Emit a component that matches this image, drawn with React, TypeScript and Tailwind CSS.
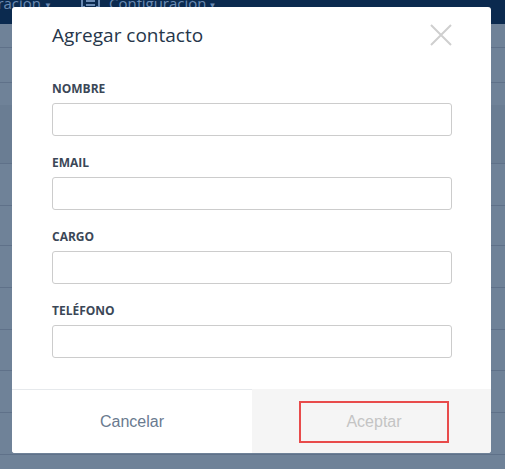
import { Fragment } from "react";

const rowLines = [47, 82, 163, 205, 245, 287, 329, 370, 412, 454];

const fields = ["NOMBRE", "EMAIL", "CARGO", "TELÉFONO"];

export default function App() {
  return (
    <div className="relative h-[469px] w-[505px] overflow-hidden bg-[#6f8298] font-['Open_Sans',sans-serif]">
      {/* page behind the overlay */}
      <div className="flex h-[24px] items-start overflow-hidden bg-[#0b2a4f] text-[15px] leading-none text-[#6a8ab3]">
        <span className="-ml-[2px] -mt-[4px] flex w-[54px] shrink-0 items-center justify-end whitespace-nowrap">
          ración<span className="ml-[3px] mt-[2px] text-[8px]">▼</span>
        </span>
        <svg width="19" height="14" viewBox="0 0 19 14" className="ml-[29px] -mt-[6px] shrink-0">
          <path d="M1 0V13H4M18 0V13H15" fill="none" stroke="#6a8ab3" strokeWidth="2" />
          <rect x="5" y="2" width="9" height="2" fill="#6a8ab3" />
          <rect x="5" y="6" width="9" height="2" fill="#6a8ab3" />
          <rect x="5" y="10" width="9" height="2" fill="#6a8ab3" />
        </svg>
        <span className="ml-[9px] -mt-[4px] flex items-center whitespace-nowrap">
          Configuración<span className="ml-[2px] mt-[2px] text-[8px]">▼</span>
        </span>
      </div>
      <div className="relative h-[445px]">
        <div className="absolute left-0 right-0 top-[81px] h-[58px] bg-[#6a7d93]" />
        {rowLines.map((y) => (
          <Fragment key={y}>
            <div
              className="absolute left-0 right-0 h-px bg-[#5f7189]"
              style={{ top: y - 24 }}
            />
          </Fragment>
        ))}
      </div>

      {/* modal */}
      <div className="absolute left-[12px] top-[7px] flex h-[446px] w-[479px] flex-col overflow-hidden rounded-[3px] bg-white">
        <div className="flex items-start justify-between pl-[40px] pr-[38px] pt-[15px]">
          <h2 className="text-[19px] font-medium leading-[26px] text-[#26364a]">
            Agregar contacto
          </h2>
          <svg width="24" height="24" viewBox="0 0 24 24" className="mt-[1px]">
            <path d="M2 2L22 22M22 2L2 22" stroke="#cfcfcf" strokeWidth="2" />
          </svg>
        </div>
        <div className="flex flex-col gap-[18px] px-[40px] pt-[32px]">
          {fields.map((f) => (
            <div key={f} className="flex flex-col gap-[6px]">
              <label className="text-[12px] font-bold leading-[17px] text-[#3b4757]">
                {f}
              </label>
              <input className="h-[33px] w-[400px] rounded-[3px] border border-[#cccccc] bg-white px-2 outline-none" />
            </div>
          ))}
        </div>
        <div className="mt-auto flex h-[64px] font-['Liberation_Sans',Arial,sans-serif] text-[16px]">
          <button className="flex w-[240px] items-center justify-center border-t border-[#e6e9ec] bg-white text-[#6a7a8f]">
            Cancelar
          </button>
          <div className="flex flex-1 items-center justify-center bg-[#f5f5f5] pl-[5px] pt-[1px]">
            <button className="flex h-[42px] w-[150px] items-center justify-center border-2 border-[#e84b4b] text-[#c4c4c4]">
              Aceptar
            </button>
          </div>
        </div>
      </div>
    </div>
  );
}
